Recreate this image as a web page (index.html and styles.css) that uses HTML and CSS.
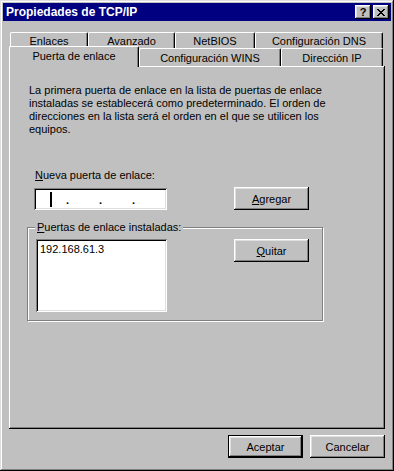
FILE: index.html
```html
<!DOCTYPE html>
<html lang="es">

<head>
    <meta charset="UTF-8">
    <meta name="viewport" content="width=device-width, initial-scale=1.0">
    <title>Propiedades de TCP/IP</title>
    <link rel="stylesheet" href="styles.css">
</head>

<body>
    <div id="window">
        <div id="titlebar">
            <span id="title">Propiedades de TCP/IP</span>
            <div id="title-buttons">
                <button class="title-btn help-btn">?</button>
                <button class="title-btn close-btn">
                    <svg width="8" height="7" viewBox="0 0 8 7" shape-rendering="crispEdges">
                        <rect x="0" y="0" width="2" height="1"/><rect x="6" y="0" width="2" height="1"/>
                        <rect x="1" y="1" width="2" height="1"/><rect x="5" y="1" width="2" height="1"/>
                        <rect x="2" y="2" width="4" height="1"/>
                        <rect x="3" y="3" width="2" height="1"/>
                        <rect x="2" y="4" width="4" height="1"/>
                        <rect x="1" y="5" width="2" height="1"/><rect x="5" y="5" width="2" height="1"/>
                        <rect x="0" y="6" width="2" height="1"/><rect x="6" y="6" width="2" height="1"/>
                    </svg>
                </button>
            </div>
        </div>

        <!-- two rows of tabs, the front row holds the open one -->
        <div id="tabs">
            <div class="tab-row back-row">
                <div class="tab tab-enlaces">Enlaces</div>
                <div class="tab tab-avanzado">Avanzado</div>
                <div class="tab tab-netbios">NetBIOS</div>
                <div class="tab tab-dns">Configuración DNS</div>
            </div>
            <div class="tab-row front-row">
                <div class="tab tab-puerta selected">Puerta de enlace</div>
                <div class="tab tab-wins">Configuración WINS</div>
                <div class="tab tab-ip">Dirección IP</div>
            </div>
        </div>

        <div id="panel">
            <p id="description">
                La primera puerta de enlace en la lista de puertas de enlace<br>
                instaladas se establecerá como predeterminado. El orden de<br>
                direcciones en la lista será el orden en el que se utilicen los<br>
                equipos.
            </p>

            <div id="new-gateway">
                <div class="field">
                    <label class="field-label"><u>N</u>ueva puerta de enlace:</label>
                    <div class="ip-edit">
                        <span class="octet"><span class="caret"></span></span>
                        <span class="dot">.</span>
                        <span class="octet"></span>
                        <span class="dot">.</span>
                        <span class="octet"></span>
                        <span class="dot">.</span>
                        <span class="octet"></span>
                    </div>
                </div>
                <button class="btn"><u>A</u>gregar</button>
            </div>

            <fieldset id="installed">
                <legend><u>P</u>uertas de enlace instaladas:</legend>
                <div class="group-body">
                    <div class="listbox">
                        <div class="list-item">192.168.61.3</div>
                    </div>
                    <button class="btn quitar-btn"><u>Q</u>uitar</button>
                </div>
            </fieldset>
        </div>

        <div id="footer">
            <button class="btn default-btn">Aceptar</button>
            <button class="btn">Cancelar</button>
        </div>
    </div>
</body>

</html>
```

FILE: styles.css
```css
body {
    margin: 0;
    background: #c0c0c0;
    font-family: "Liberation Sans", Arial, sans-serif;
    font-size: 11px;
    line-height: 13px;
    color: #000;
}

#window {
    width: 394px;
    height: 471px;
    box-sizing: border-box;
    padding: 3px;
    background: #c0c0c0;
    display: flex;
    flex-direction: column;
    box-shadow: inset -1px -1px #000, inset 1px 1px #dfdfdf,
                inset -2px -2px #808080, inset 2px 2px #fff;
}

#titlebar {
    height: 18px;
    flex-shrink: 0;
    background: #000080;
    color: #fff;
    display: flex;
    align-items: center;
    justify-content: space-between;
    padding: 0 2px 0 3px;
}

#title {
    font-size: 12px;
    font-weight: bold;
}

#title-buttons {
    display: flex;
    gap: 2px;
}

.title-btn {
    width: 16px;
    height: 14px;
    padding: 0;
    border: none;
    background: #c0c0c0;
    display: flex;
    align-items: center;
    justify-content: center;
    font-family: "Liberation Sans", Arial, sans-serif;
    font-size: 11px;
    font-weight: bold;
    color: #000;
    box-shadow: inset -1px -1px #000, inset 1px 1px #fff,
                inset -2px -2px #808080, inset 2px 2px #dfdfdf;
}

.close-btn svg {
    fill: #000;
}

/* tabs */
#tabs {
    margin-top: 11px;
    padding: 0 6px;
}

.tab-row {
    display: flex;
}

.back-row {
    height: 16px;
    padding-left: 1px;
}

.front-row {
    height: 18px;
    align-items: flex-end;
}

.tab {
    box-sizing: border-box;
    height: 100%;
    display: flex;
    align-items: center;
    justify-content: center;
    background: #c0c0c0;
    border-top: 1px solid #fff;
    border-left: 1px solid #fff;
    border-right: 1px solid #000;
    border-radius: 2px 2px 0 0;
    box-shadow: inset -1px 0 #808080;
    padding-top: 1px;
}

.tab-enlaces { width: 78px; }
.tab-avanzado { width: 87px; }
.tab-netbios { width: 80px; }
.tab-dns { width: 128px; }
.tab-puerta { width: 130px; }
.tab-wins { width: 142px; }
.tab-ip { width: 102px; }

.front-row .tab {
    height: 18px;
}

.front-row .tab.selected {
    height: 21px;
    margin-bottom: -1px;
    padding-bottom: 2px;
    z-index: 1;
}

/* page */
#panel {
    margin: 0 6px;
    height: 363px;
    flex-shrink: 0;
    box-sizing: border-box;
    padding: 18px 0 0 20px;
    box-shadow: inset -1px -1px #000, inset 1px 1px #fff,
                inset -2px -2px #808080;
}

#description {
    margin: 0;
}

#new-gateway {
    margin-top: 33px;
    padding-left: 5px;
    display: flex;
    align-items: flex-end;
}

.field {
    width: 200px;
}

.field-label {
    display: block;
    margin-left: 1px;
}

.ip-edit {
    margin-top: 6px;
    width: 133px;
    height: 22px;
    box-sizing: border-box;
    padding: 2px;
    background: #fff;
    display: flex;
    align-items: center;
    box-shadow: inset 1px 1px #808080, inset -1px -1px #fff,
                inset 2px 2px #000, inset -2px -2px #dfdfdf;
}

.octet {
    width: 30px;
    height: 100%;
    display: flex;
    align-items: center;
}

.dot {
    width: 3px;
    padding-top: 3px;
    font-weight: bold;
}

.caret {
    width: 2px;
    height: 15px;
    margin-left: 14px;
    background: #000;
}

.btn {
    width: 75px;
    height: 23px;
    padding: 0;
    border: none;
    background: #c0c0c0;
    font-family: "Liberation Sans", Arial, sans-serif;
    font-size: 11px;
    color: #000;
    box-shadow: inset -1px -1px #000, inset 1px 1px #fff,
                inset -2px -2px #808080, inset 2px 2px #dfdfdf;
}

.default-btn {
    box-shadow: inset 0 0 0 1px #000, inset -2px -2px #000, inset 2px 2px #fff,
                inset -3px -3px #808080, inset 3px 3px #dfdfdf;
}

#installed {
    margin: 11px 0 0 -2px;
    padding: 0;
    width: 296px;
    min-width: 0;
    box-sizing: border-box;
    border: 1px solid #808080;
    box-shadow: inset 1px 1px #fff, 1px 1px #fff;
}

#installed legend {
    margin-left: 7px;
    padding: 0 2px;
    background: #c0c0c0;
}

.group-body {
    display: flex;
    align-items: flex-start;
    padding: 5px 0 8px 8px;
}

.listbox {
    width: 131px;
    height: 73px;
    box-sizing: border-box;
    padding: 2px;
    background: #fff;
    box-shadow: inset 1px 1px #808080, inset -1px -1px #fff,
                inset 2px 2px #000, inset -2px -2px #dfdfdf;
}

.list-item {
    padding: 2px 2px 0;
}

.quitar-btn {
    margin-left: 67px;
}

#footer {
    margin-top: 6px;
    padding-right: 6px;
    display: flex;
    justify-content: flex-end;
    gap: 7px;
}
```
